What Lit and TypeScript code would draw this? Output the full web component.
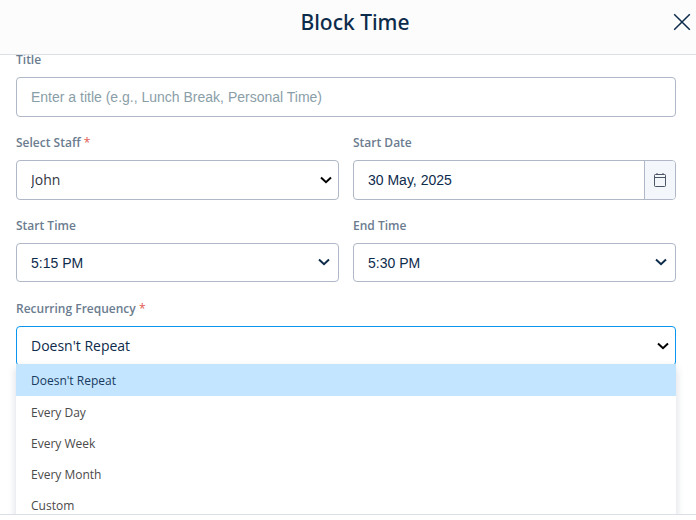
import { LitElement, html, css, svg } from "lit";
import { customElement, state } from "lit/decorators.js";
import { classMap } from "lit/directives/class-map.js";

const chevron = svg`<svg class="chevron" width="14" height="10" viewBox="0 0 14 10" aria-hidden="true">
  <path d="M2 2.5 7 7.2 12 2.5" fill="none" stroke="currentColor" stroke-width="2" />
</svg>`;

const closeIcon = svg`<svg width="18" height="18" viewBox="0 0 18 18" aria-hidden="true">
  <path d="M1.2 1.2 16.8 16.8M16.8 1.2 1.2 16.8" fill="none" stroke="currentColor" stroke-width="1.5" />
</svg>`;

const calendarIcon = svg`<svg width="14" height="16" viewBox="0 0 14 16" aria-hidden="true">
  <rect x="1.5" y="2.5" width="11" height="12" rx="0.8" fill="none" stroke="currentColor" />
  <path d="M1.5 5.5H12.5M4 1V3M10 1V3" fill="none" stroke="currentColor" />
</svg>`;

@customElement("app-root")
export class AppRoot extends LitElement {
  @state() private frequency = "Doesn't Repeat";

  private readonly frequencies = ["Doesn't Repeat", "Every Day", "Every Week", "Every Month", "Custom"];

  static styles = css`
    :host {
      display: flex;
      flex-direction: column;
      height: 100vh;
      background: #fff;
      color: #0d2b4b;
      font-family: "Open Sans", "Noto Sans", sans-serif;
      font-size: 14px;
    }
    * {
      box-sizing: border-box;
    }
    .header {
      flex: none;
      display: grid;
      grid-template-columns: 18px 1fr 18px;
      align-items: center;
      height: 55px;
      padding: 0 5px 10px;
      background: #fcfcfc;
      border-bottom: 1px solid #dbe0e5;
    }
    .heading {
      grid-column: 2;
      margin: 0;
      padding-left: 14px;
      text-align: center;
      font-family: "Noto Sans", sans-serif;
      font-size: 21px;
      font-weight: 500;
      line-height: 28px;
    }
    .close {
      display: flex;
      padding: 0;
      border: 0;
      background: none;
      color: inherit;
      cursor: pointer;
    }
    .body {
      flex: 1;
      min-height: 0;
      overflow: hidden;
      padding: 0 20px 0 16px;
    }
    .form {
      display: grid;
      grid-template-columns: 1fr 1fr;
      gap: 17px 14px;
      margin-top: -3px;
    }
    .field {
      min-width: 0;
      min-height: 66px;
    }
    .wide {
      grid-column: 1 / -1;
    }
    .label {
      display: block;
      margin-bottom: 9px;
      color: #6b7c8f;
      font-size: 12px;
      font-weight: 600;
      line-height: 16px;
    }
    .required {
      color: #e25950;
      font-weight: 400;
    }
    .control {
      position: relative;
      display: flex;
      height: 40px;
      border: 1px solid #b0b7c6;
      border-radius: 4px;
      background: #fff;
    }
    .time {
      height: 39px;
    }
    .input {
      flex: 1;
      width: 100%;
      min-width: 0;
      padding: 0 14px 2px;
      border: 0;
      border-radius: 4px;
      outline: 0;
      appearance: none;
      background: none;
      color: inherit;
      font: inherit;
    }
    .plain {
      padding-bottom: 0;
      font-family: "Liberation Sans", Arial, sans-serif;
    }
    .dark {
      color: #32373f;
    }
    .input::placeholder {
      color: #8a9ea8;
      opacity: 1;
    }
    .chevron {
      position: absolute;
      right: 5px;
      top: 14px;
      color: #000;
      pointer-events: none;
    }
    .time .chevron {
      right: 7px;
      top: 13px;
      color: #0d2b4b;
    }
    .addon {
      flex: none;
      display: flex;
      align-items: center;
      justify-content: center;
      width: 31px;
      padding: 0;
      border: 0;
      border-left: 1px solid #b0b7c6;
      border-radius: 0 3px 3px 0;
      background: #f3f7fb;
      color: #4c5566;
    }
    .open {
      border-color: #0a96f0;
    }
    .menu {
      position: absolute;
      z-index: 1;
      top: 37px;
      left: -1px;
      right: -1px;
      display: grid;
      margin: 0;
      padding: 0;
      list-style: none;
      background: #fff;
      box-shadow: 0 4px 8px rgba(50, 70, 100, 0.2);
    }
    .option {
      display: block;
      width: 100%;
      height: 31px;
      padding: 0 15px;
      border: 0;
      background: none;
      color: #4a4a4a;
      font: inherit;
      font-size: 12px;
      text-align: left;
    }
    .selected {
      height: 32px;
      margin-bottom: 1px;
      background: #c4e5ff;
      color: #173a5e;
    }
    .footer {
      flex: none;
      height: 6px;
      border-top: 1px solid #d9dfe5;
      background: #fff;
    }
  `;

  private pick(value: string) {
    this.frequency = value;
  }

  render() {
    return html`
      <header class="header">
        <h1 class="heading">Block Time</h1>
        <button class="close" aria-label="Close">${closeIcon}</button>
      </header>
      <main class="body">
        <form class="form">
          <div class="field wide">
            <label class="label" for="title">Title</label>
            <div class="control">
              <input class="input plain" id="title" placeholder="Enter a title (e.g., Lunch Break, Personal Time)" />
            </div>
          </div>
          <div class="field">
            <label class="label" for="staff">Select Staff <span class="required">*</span></label>
            <div class="control">
              <select class="input dark" id="staff"><option>John</option></select>
              ${chevron}
            </div>
          </div>
          <div class="field">
            <label class="label" for="date">Start Date</label>
            <div class="control">
              <input class="input plain" id="date" value="30 May, 2025" />
              <button class="addon" type="button" aria-label="Choose date">${calendarIcon}</button>
            </div>
          </div>
          <div class="field">
            <label class="label" for="start">Start Time</label>
            <div class="control time">
              <select class="input plain" id="start"><option>5:15 PM</option></select>
              ${chevron}
            </div>
          </div>
          <div class="field">
            <label class="label" for="end">End Time</label>
            <div class="control time">
              <select class="input plain" id="end"><option>5:30 PM</option></select>
              ${chevron}
            </div>
          </div>
          <div class="field wide">
            <label class="label" for="frequency">Recurring Frequency <span class="required">*</span></label>
            <div class="control open">
              <select
                class="input"
                id="frequency"
                @change=${(e: Event) => this.pick((e.target as HTMLSelectElement).value)}
              >
                ${this.frequencies.map((f) => html`<option ?selected=${f === this.frequency}>${f}</option>`)}
              </select>
              ${chevron}
              <ul class="menu">
                ${this.frequencies.map(
                  (f) => html`<li>
                    <button
                      type="button"
                      class=${classMap({ option: true, selected: f === this.frequency })}
                      @click=${() => this.pick(f)}
                    >${f}</button>
                  </li>`
                )}
              </ul>
            </div>
          </div>
        </form>
      </main>
      <footer class="footer"></footer>
    `;
  }
}
